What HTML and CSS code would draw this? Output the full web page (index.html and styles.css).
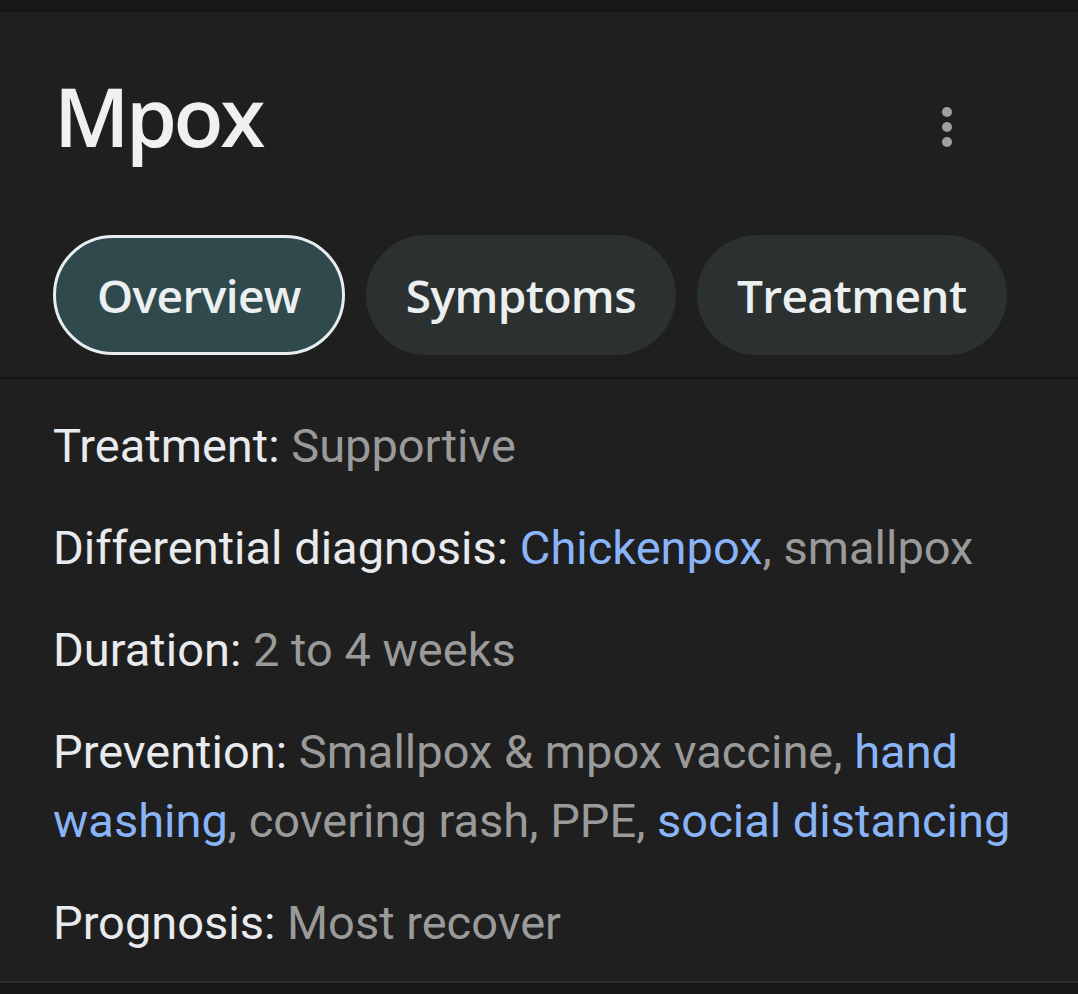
FILE: index.html
```html
<!DOCTYPE html>
<html>
<head>
    <title>Mpox</title>
    <link rel="stylesheet" href="styles.css">
</head>
<body>
    <div class="topbar"></div>
    <div class="panel">
        <div class="header">
            <h1>Mpox</h1>
            <button class="more" aria-label="More options">
                <svg width="12" height="42" viewBox="0 0 12 42">
                    <circle cx="6" cy="6" r="5"/>
                    <circle cx="6" cy="21" r="5"/>
                    <circle cx="6" cy="36" r="5"/>
                </svg>
            </button>
        </div>

        <div class="tabs">
            <span class="chip active">Overview</span>
            <span class="chip">Symptoms</span>
            <span class="chip">Treatment</span>
        </div>

        <div class="facts">
            <p><span class="label">Treatment:</span> <span class="value">Supportive</span></p>
            <p><span class="label">Differential diagnosis:</span> <a href="#">Chickenpox</a><span class="value">, smallpox</span></p>
            <p><span class="label">Duration:</span> <span class="value">2 to 4 weeks</span></p>
            <p><span class="label">Prevention:</span> <span class="value">Smallpox &amp; mpox vaccine,</span> <a href="#">hand washing</a><span class="value">, covering rash, PPE,</span> <a href="#">social distancing</a></p>
            <p><span class="label">Prognosis:</span> <span class="value">Most recover</span></p>
        </div>
    </div>
    <div class="bottombar"></div>
</body>
</html>
```

FILE: styles.css
```css
body {
    margin: 0;
    background-color: #1f1f1f;
    font-family: Roboto, "Liberation Sans", sans-serif;
    overflow: hidden;
}
.topbar {
    height: 12px;
    background-color: #171717;
}
.panel {
    background-color: #1f1f1f;
}
.header {
    display: flex;
    align-items: flex-start;
    justify-content: space-between;
    padding: 69px 125px 0 54px;
    height: 130px;
    box-sizing: border-box;
}
h1 {
    margin: 0;
    font-family: "Open Sans", sans-serif;
    font-weight: 600;
    font-size: 82px;
    line-height: 68px;
    color: #eef0f1;
    letter-spacing: -3.5px;
}
.more {
    background: none;
    border: none;
    padding: 0;
    margin-top: 25px;
    fill: #a0a0a0;
    display: flex;
}
.tabs {
    display: flex;
    gap: 21px;
    padding: 93px 0 22px 53px;
    border-bottom: 2px solid #141414;
}
.chip {
    display: flex;
    align-items: center;
    height: 120px;
    box-sizing: border-box;
    padding: 0 40px;
    border-radius: 60px;
    background-color: #2b3131;
    color: #eceff0;
    font-family: "Open Sans", sans-serif;
    font-weight: 600;
    font-size: 46px;
    letter-spacing: -0.6px;
}
.chip.active {
    background-color: #30494c;
    border: 3px solid #e8eef0;
    padding: 0 41px;
}
.facts {
    padding: 32px 54px 24px 53px;
    border-bottom: 2px solid #2c2c2c;
}
.facts p {
    margin: 0 0 33px;
    font-size: 47px;
    line-height: 69px;
}
.facts p:last-child {
    margin-bottom: 0;
}
.label {
    color: #e8eaed;
}
.value {
    color: #9a9a9a;
}
.facts a {
    color: #8ab4f8;
    text-decoration: none;
}
.bottombar {
    height: 20px;
    background-color: #171717;
}
```
